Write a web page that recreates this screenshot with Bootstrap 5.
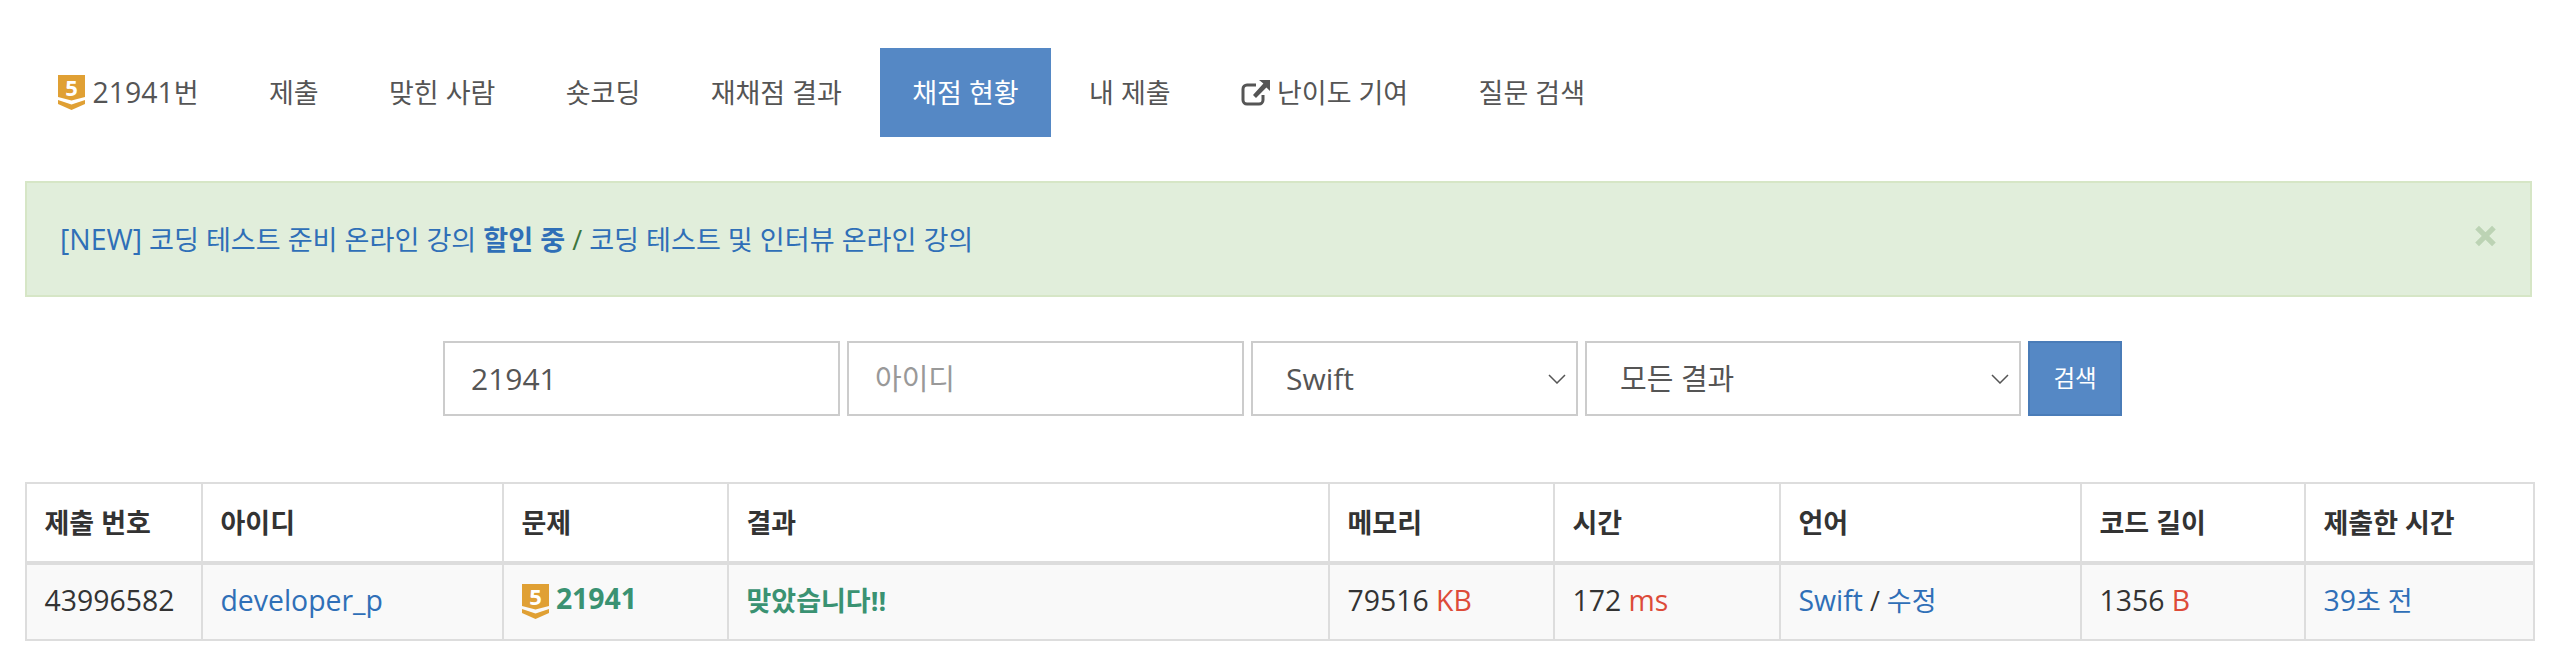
<!DOCTYPE html>
<html lang="ko">
<head>
<meta charset="utf-8">
<title>채점 현황</title>
<link href="https://cdn.jsdelivr.net/npm/bootstrap@5.3.0/dist/css/bootstrap.min.css" rel="stylesheet">
<style>
body{font-family:"Open Sans","Noto Sans CJK KR",sans-serif;font-size:27px;line-height:1.43;color:#333;background:#fff;padding:48px 18px 0 25px;overflow:hidden}
a{color:#2f6fb7;text-decoration:none}
.lat{font-size:28.4px}
.tabs{gap:5.4px;margin-bottom:44px}
.tabs .nav-link{font-size:27px;line-height:33px;padding:28px 32.5px;color:#555;border-radius:0;height:89px;display:flex;align-items:center}
.tabs .nav-link.active{background:#5588c5;color:#fff}
.tabs .lvl{margin-right:8px}
.tabs .ext{margin-right:6px}
.notice{--bs-alert-bg:#e1eedb;--bs-alert-border-color:#d6e6c6;--bs-alert-color:#3c763d;--bs-alert-border-radius:0;--bs-alert-margin-bottom:44px;border-width:2px;padding:39px 33px;height:116px;font-size:27.1px;line-height:34px;margin-bottom:44px}
.notice .x-mark{position:absolute;top:calc(50% - 3px);right:34px;transform:translateY(-50%);width:21px;height:21px;color:#bcd3b4}
.filters{gap:7px;margin-bottom:66px;padding-left:418px}
.filters .form-control,.filters .form-select{height:75px;border:2px solid #ccc;border-radius:0;font-size:29px;color:#555;padding:0 26px;box-shadow:none}
.filters .f-num,.filters .f-lang{font-size:30px}
.filters .form-control::placeholder{color:#999}
.filters .form-select{padding:0 60px 0 33px;background-size:18px 10px;background-position:right 10px center;background-image:url("data:image/svg+xml,%3csvg xmlns='http://www.w3.org/2000/svg' viewBox='0 0 18 10'%3e%3cpath fill='none' stroke='%23555' stroke-width='1.5' d='M1 1l8 8 8-8'/%3e%3c/svg%3e")}
.f-num,.f-id{width:397px;flex:none}
.f-lang{width:327px;flex:none}
.f-res{width:436px;flex:none}
.btn-find{--bs-btn-bg:#5588c5;--bs-btn-border-color:#4a7cb8;--bs-btn-color:#fff;--bs-btn-border-radius:0;--bs-btn-font-size:23.500px;border-width:2px;width:94px;height:75px;padding:0}
.result-table{--bs-table-border-color:#ddd;--bs-table-striped-bg:#f9f9f9;--bs-table-striped-color:#333;--bs-table-color:#333;width:2508px;table-layout:fixed;margin:0;border-collapse:collapse;border:2px solid #ddd}
.result-table th,.result-table td{border:2px solid #ddd;padding:0 17.5px;font-size:27px;height:77px;vertical-align:middle;line-height:33px}
.result-table tbody td{padding-bottom:3px}
.result-table td.lat{font-size:28.4px}
.result-table thead th{border-bottom-width:4px;font-weight:700;height:80px}
.c1{width:176px}.c2{width:301px}.c3{width:225px}.c4{width:601px}.c5{width:225px}.c6{width:226px}.c7{width:301px}.c8{width:224px}.c9{width:229px}
.unit{color:#dd4b39}
.ac{color:#3a9272;font-weight:700}
.lvl{width:27px;height:35px;flex:none;display:inline-block;vertical-align:middle;overflow:visible}
.lvl text{font-family:"Open Sans",sans-serif;font-weight:700;font-size:22px;fill:#fff}
.ext{width:30px;height:26px;flex:none}
</style>
</head>
<body>
<ul class="nav tabs">
  <li class="nav-item"><a class="nav-link" href="#"><svg class="lvl" viewBox="0 0 27 35"><path fill="#e0a034" d="M0 0h27v22l-13.500 3.500L0 22zM0 25l13.500 4.500L27 25v4l-13.500 6L0 29z"/><text x="13.5" y="21" text-anchor="middle">5</text></svg><span class="lat">21941</span>번</a></li>
  <li class="nav-item"><a class="nav-link" href="#">제출</a></li>
  <li class="nav-item"><a class="nav-link" href="#">맞힌 사람</a></li>
  <li class="nav-item"><a class="nav-link" href="#">숏코딩</a></li>
  <li class="nav-item"><a class="nav-link" href="#">재채점 결과</a></li>
  <li class="nav-item"><a class="nav-link active" href="#">채점 현황</a></li>
  <li class="nav-item"><a class="nav-link" href="#">내 제출</a></li>
  <li class="nav-item"><a class="nav-link" href="#"><svg class="ext" viewBox="0 0 30 26"><path fill="none" stroke="#555" stroke-width="3" d="M15 5H6a4 4 0 0 0-4 4v11a4 4 0 0 0 4 4h12a4 4 0 0 0 4-4v-5"/><path fill="#555" d="M18 0h11v11l-3.600-3.600L15 18l-3-3L22.400 3.600z"/></svg>난이도 기여</a></li>
  <li class="nav-item"><a class="nav-link" href="#">질문 검색</a></li>
</ul>
<div class="alert alert-dismissible notice position-relative">
  <a href="#"><span class="lat">[NEW]</span> 코딩 테스트 준비 온라인 강의 <b>할인 중</b></a> / <a href="#">코딩 테스트 및 인터뷰 온라인 강의</a>
  <svg class="x-mark" viewBox="0 0 20 20"><path stroke="currentColor" stroke-width="5" d="M2 2l16 16M18 2L2 18"/></svg>
</div>
<form class="d-flex filters">
  <input class="form-control f-num" value="21941">
  <input class="form-control f-id" placeholder="아이디">
  <select class="form-select f-lang"><option>Swift</option></select>
  <select class="form-select f-res"><option>모든 결과</option></select>
  <button type="button" class="btn btn-primary btn-find">검색</button>
</form>
<table class="table table-bordered table-striped result-table">
  <colgroup><col class="c1"><col class="c2"><col class="c3"><col class="c4"><col class="c5"><col class="c6"><col class="c7"><col class="c8"><col class="c9"></colgroup>
  <thead><tr><th>제출 번호</th><th>아이디</th><th>문제</th><th>결과</th><th>메모리</th><th>시간</th><th>언어</th><th>코드 길이</th><th>제출한 시간</th></tr></thead>
  <tbody><tr>
    <td class="lat">43996582</td>
    <td class="lat"><a href="#">developer_p</a></td>
    <td class="lat"><svg class="lvl" viewBox="0 0 27 35"><path fill="#e0a034" d="M0 0h27v22l-13.500 3.500L0 22zM0 25l13.500 4.500L27 25v4l-13.500 6L0 29z"/><text x="13.5" y="21" text-anchor="middle">5</text></svg> <a href="#" class="ac">21941</a></td>
    <td><span class="ac">맞았습니다!!</span></td>
    <td class="lat">79516 <span class="unit">KB</span></td>
    <td class="lat">172 <span class="unit">ms</span></td>
    <td><a href="#" class="lat">Swift</a> / <a href="#">수정</a></td>
    <td class="lat">1356 <span class="unit">B</span></td>
    <td><a href="#"><span class="lat">39</span>초 전</a></td>
  </tr></tbody>
</table>
<script src="https://cdn.jsdelivr.net/npm/bootstrap@5.3.0/dist/js/bootstrap.bundle.min.js"></script>
</body>
</html>
